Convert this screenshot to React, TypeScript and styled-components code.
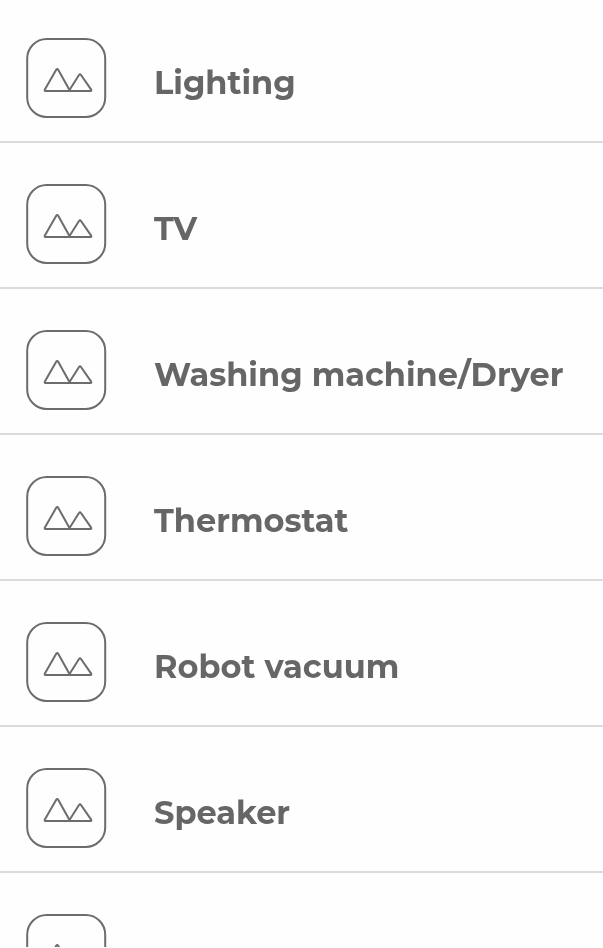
import React from 'react';
import styled, { createGlobalStyle } from 'styled-components';

const GlobalStyle = createGlobalStyle`
  * { box-sizing: border-box; }
  html, body { margin: 0; height: 100%; overflow: hidden; background: #fefefe; }
`;

const List = styled.ul`
  margin: 0;
  padding: 0;
  height: 947px;
  overflow: hidden;
  list-style: none;
`;

const Row = styled.li`
  display: flex;
  align-items: flex-start;
  gap: 48px;
  height: 146px;
  padding: 41px 0 0 26px;
  border-bottom: 2px solid #dcdcdc;

  &:first-child {
    height: 143px;
    padding-top: 38px;
  }
`;

const Thumbnail = styled.svg`
  display: block;
  flex: none;
  width: 80px;
  height: 80px;
  overflow: visible;
  fill: none;
  stroke: #6c6c6c;
  stroke-width: 2;
  stroke-linejoin: round;
`;

const Name = styled.span`
  padding-top: 25px;
  color: #666;
  font: 700 32px/40px Montserrat, Inter, sans-serif;
  white-space: nowrap;
  will-change: transform;
`;

const devices = [
  'Lighting',
  'TV',
  'Washing machine/Dryer',
  'Thermostat',
  'Robot vacuum',
  'Speaker',
  '',
];

export default function App() {
  return (
    <>
      <GlobalStyle />
      <List>
        {devices.map((name) => (
          <Row key={name}>
            <Thumbnail viewBox="0 0 80 80" aria-hidden="true">
              <rect x="1.2" y="1" width="78" height="78" rx="19.5" />
              <path d="M19 51.3L30.2 31.8Q31.2 30.2 32.2 31.8L43.5 52L53 37Q54 35.5 55 37L65 51.4Q65.9 53 64.4 53H19.6Q18.1 53 19 51.3Z" />
            </Thumbnail>
            <Name>{name}</Name>
          </Row>
        ))}
      </List>
    </>
  );
}
